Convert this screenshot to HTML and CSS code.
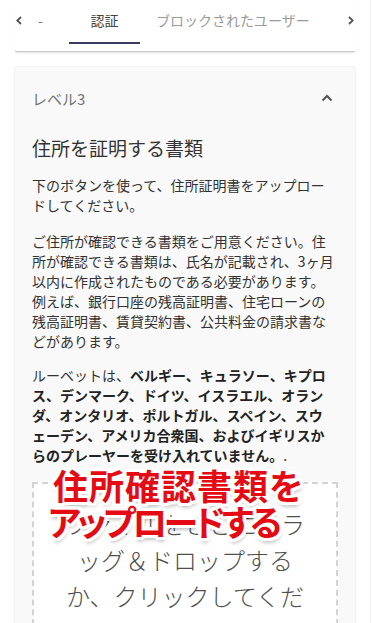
FILE: index.html
```html
<!DOCTYPE html>
<html lang="ja">
<head>
<meta charset="utf-8">
<link rel="stylesheet" href="styles.css">
</head>
<body>
<div class="page">
  <div class="tabbar">
    <div class="tb-arrow tb-left"><svg width="6" height="9" viewBox="0 0 6 9"><polyline points="5,1 1.3,4.5 5,8" fill="none" stroke="#555" stroke-width="1.8"/></svg></div>
    <div class="tab tab-prev">-</div>
    <div class="tab tab-active">認証</div>
    <div class="tab tab-next">ブロックされたユーザー</div>
    <div class="tb-arrow tb-right"><svg width="6" height="9" viewBox="0 0 6 9"><polyline points="1,1 4.7,4.5 1,8" fill="none" stroke="#555" stroke-width="1.8"/></svg></div>
  </div>
  <div class="card">
    <div class="card-head">
      <span class="level">レベル3</span>
      <svg class="up" width="12" height="8" viewBox="0 0 12 8"><polyline points="1.5,6.5 6,2 10.5,6.5" fill="none" stroke="#555" stroke-width="2"/></svg>
    </div>
    <div class="card-body">
      <h2 class="title">住所を証明する書類</h2>
      <p class="para">下のボタンを使って、住所証明書をアップロードしてください。</p>
      <p class="para">ご住所が確認できる書類をご用意ください。住所が確認できる書類は、氏名が記載され、3ヶ月以内に作成されたものである必要があります。例えば、銀行口座の残高証明書、住宅ローンの残高証明書、賃貸契約書、公共料金の請求書などがあります。</p>
      <p class="para para-last">ルーベットは、<b class="strong">ベルギー、キュラソー、キプロス、デンマーク、ドイツ、イスラエル、オランダ、オンタリオ、ポルトガル、スペイン、スウェーデン、アメリカ合衆国、およびイギリスからのプレーヤーを受け入れていません。</b>.</p>
      <div class="dropzone">
        <div class="dz-text">ファイルをここにドラッグ＆ドロップするか、クリックしてください。</div>
        <div class="callout"><span class="co-l1">住所確認書類を</span><br><span class="co-l2">アップロードする</span></div>
      </div>
    </div>
  </div>
</div>
</body>
</html>
```

FILE: styles.css
```css
html, body {
  margin: 0;
  padding: 0;
  background: #fff;
}
body {
  font-family: "Noto Sans CJK JP", "Noto Sans", sans-serif;
  color: #333;
  width: 372px;
  height: 623px;
  overflow: hidden;
}
.page {
  width: 370px;
  min-height: 623px;
  border-right: 1px solid #ececec;
}
.tabbar {
  display: flex;
  width: 340px;
  margin-left: 15px;
  padding-bottom: 7px;
  background: #fff;
  border-bottom: 1px solid #c8c8c8;
  box-shadow: 0 2px 2px -1px rgba(0,0,0,0.12);
}
.tb-arrow {
  box-sizing: border-box;
  height: 44px;
  padding-top: 16px;
}
.tb-arrow svg { display: block; }
.tb-left { width: 23px; padding-left: 1px; }
.tb-right { width: 29px; padding-left: 22px; }
.tab {
  box-sizing: border-box;
  height: 44px;
  padding-top: 10px;
  font-size: 14px;
  line-height: 20px;
  white-space: nowrap;
  color: #999;
}
.tab-prev { width: 31px; color: #777; }
.tab-active {
  width: 71px;
  text-align: center;
  color: #444;
  border-bottom: 2px solid #3c3c60;
}
.tab-next {
  width: 186px;
  text-align: center;
  color: #9a9a9a;
}
.card {
  width: 340px;
  margin: 15px 0 0 15px;
  background: #f9f9f9;
  box-shadow: 0 0 2px rgba(0,0,0,0.14);
  padding-bottom: 40px;
}
.card-head {
  box-sizing: border-box;
  height: 62px;
  display: flex;
  align-items: center;
  justify-content: space-between;
  padding: 0 22px 0 17px;
}
.level {
  font-size: 15px;
  color: #757575;
}
.up { display: block; }
.card-body {
  padding: 0 17px;
}
.title {
  margin: 6px 0 0;
  font-size: 19px;
  font-weight: 400;
  line-height: 26px;
  color: #333;
}
.para {
  margin: 14px 0 0;
  padding-right: 3px;
  font-size: 14px;
  line-height: 20px;
  color: #333;
  line-break: loose;
}
.para + .para { margin-top: 16px; }
.para.para-last { margin-top: 14px; }
.strong { font-weight: 700; color: #222; }
.dropzone {
  position: relative;
  margin-top: 17px;
  border: 2px dashed #d4d4d4;
  background: #fff;
  padding: 22px 24px;
  text-align: center;
}
.dz-text {
  font-size: 24px;
  line-height: 36px;
  font-weight: 300;
  color: #4f4f4f;
  line-break: loose;
}
.callout {
  position: absolute;
  left: 19px;
  top: -17px;
  font-size: 35px;
  font-weight: 700;
  line-height: 36px;
  font-feature-settings: "palt";
  color: #e50b14;
  text-align: left;
  white-space: nowrap;
  text-shadow:
    3px 0 0 #fff, -3px 0 0 #fff, 0 3px 0 #fff, 0 -3px 0 #fff,
    2px 2px 0 #fff, -2px 2px 0 #fff, 2px -2px 0 #fff, -2px -2px 0 #fff,
    3px 2px 0 #fff, -3px 2px 0 #fff, 3px -2px 0 #fff, -3px -2px 0 #fff,
    2px 3px 0 #fff, -2px 3px 0 #fff, 2px -3px 0 #fff, -2px -3px 0 #fff,
    1px 4px 4px rgba(0,0,0,0.35);
}
.co-l1 { letter-spacing: 1px; }
.co-l2 { letter-spacing: -3.5px; margin-left: -5px; }
```
